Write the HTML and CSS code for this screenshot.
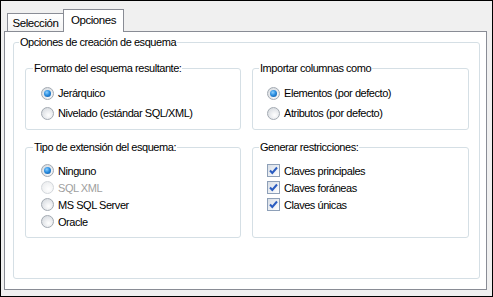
FILE: index.html
```html
<!DOCTYPE html>
<html>
<head>
<meta charset="utf-8">
<link rel="stylesheet" href="styles.css">
</head>
<body>
<div class="win">
  <div class="tabs">
    <div class="tab">Selección</div>
    <div class="tab active">Opciones</div>
  </div>
  <div class="panel">
    <div class="group outer">
      <div class="legend">Opciones de creación de esquema</div>
      <div class="grid">
        <div class="group top">
          <div class="legend">Formato del esquema resultante:</div>
          <div class="rows tall">
            <div class="row"><span class="radio on"></span>Jerárquico</div>
            <div class="row"><span class="radio"></span>Nivelado (estándar SQL/XML)</div>
          </div>
        </div>
        <div class="group top">
          <div class="legend">Importar columnas como</div>
          <div class="rows tall">
            <div class="row"><span class="radio on"></span>Elementos (por defecto)</div>
            <div class="row"><span class="radio"></span>Atributos (por defecto)</div>
          </div>
        </div>
        <div class="group">
          <div class="legend">Tipo de extensión del esquema:</div>
          <div class="rows">
            <div class="row"><span class="radio on"></span>Ninguno</div>
            <div class="row disabled"><span class="radio"></span>SQL XML</div>
            <div class="row"><span class="radio"></span>MS SQL Server</div>
            <div class="row"><span class="radio"></span>Oracle</div>
          </div>
        </div>
        <div class="group">
          <div class="legend">Generar restricciones:</div>
          <div class="rows">
            <div class="row"><span class="check"><svg width="11" height="11" viewBox="0 0 11 11"><path d="M2 5.5 L4.3 8 L9 2.5" fill="none" stroke="#2a5cc0" stroke-width="2"/></svg></span>Claves principales</div>
            <div class="row"><span class="check"><svg width="11" height="11" viewBox="0 0 11 11"><path d="M2 5.5 L4.3 8 L9 2.5" fill="none" stroke="#2a5cc0" stroke-width="2"/></svg></span>Claves foráneas</div>
            <div class="row"><span class="check"><svg width="11" height="11" viewBox="0 0 11 11"><path d="M2 5.5 L4.3 8 L9 2.5" fill="none" stroke="#2a5cc0" stroke-width="2"/></svg></span>Claves únicas</div>
          </div>
        </div>
      </div>
    </div>
  </div>
</div>
</body>
</html>
```
FILE: styles.css
```css
* { box-sizing: border-box; }
html, body { margin: 0; padding: 0; }
body {
  font-family: "Liberation Sans", Arial, sans-serif;
  font-size: 11px;
  letter-spacing: -0.45px;
  color: #000;
  background: #f0f0f0;
}
.win {
  width: 493px;
  height: 297px;
  border: 1px solid #000;
  background: #f0f0f0;
  padding: 8px 0 0 3px;
}
.tabs {
  display: flex;
  align-items: flex-end;
  height: 22px;
  padding-left: 3px;
}
.tab {
  height: 18px;
  width: 57px;
  border: 1px solid #898c95;
  border-bottom: none;
  background: linear-gradient(#ffffff, #f3f3f3);
  display: flex;
  align-items: center;
  justify-content: center;
  padding-top: 1px;
  line-height: 13px;
  font-size: 11.5px;
}
.tab.active {
  position: relative;
  z-index: 1;
  width: 61px;
  height: 23px;
  margin-left: -1px;
  margin-bottom: -1px;
  background: #fff;
  padding-top: 0;
  padding-bottom: 2px;
}
.panel {
  width: 483px;
  height: 259px;
  border: 1px solid #898c95;
  background: #fff;
  padding-top: 10px;
  padding-left: 8px;
}
.group {
  border: 1px solid #d5dfe5;
  border-radius: 3px;
  padding: 0 6px 7px 15px;
}
.legend {
  width: max-content;
  margin: -7px 0 0 -8px;
  padding: 0 1px;
  line-height: 13px;
  height: 13px;
  background: #fff;
}
.outer {
  width: 467px;
  height: 237px;
  padding: 0 10px 40px 11px;
}
.outer > .legend { margin-left: -6px; }
.grid {
  margin-top: 19px;
  display: grid;
  grid-template-columns: 216px 217px;
  grid-template-rows: 62px 91px;
  column-gap: 11px;
  row-gap: 17px;
}
.grid .group:nth-child(even) { padding-left: 14px; }
.rows { margin-top: 8px; }
.row {
  display: flex;
  align-items: center;
  gap: 4px;
  height: 17px;
  white-space: nowrap;
}
.rows.tall .row { height: 20px; }
.row.disabled { color: #a0a0a0; }
.radio {
  width: 13px;
  height: 13px;
  border-radius: 50%;
  border: 1px solid #a3aab2;
  background: radial-gradient(circle at 60% 65%, #ffffff 0%, #e9ebee 45%, #cfd4d9 100%);
  display: flex;
  align-items: center;
  justify-content: center;
  flex: none;
}
.radio.on::after {
  content: "";
  width: 7px;
  height: 7px;
  border-radius: 50%;
  background: radial-gradient(circle at 40% 35%, #8fd0ff 0%, #2a8ee0 45%, #0b4f9a 100%);
}
.row.disabled .radio {
  border-color: #d3d7db;
  background: radial-gradient(circle at 60% 65%, #ffffff 0%, #f3f4f5 50%, #e6e8ea 100%);
}
.check {
  width: 13px;
  height: 13px;
  border: 1px solid #8ea0b8;
  background: linear-gradient(135deg, #d8dee6 0%, #eef1f5 60%, #ffffff 100%);
  display: flex;
  align-items: center;
  justify-content: center;
  flex: none;
}
.check svg { display: block; }
```
